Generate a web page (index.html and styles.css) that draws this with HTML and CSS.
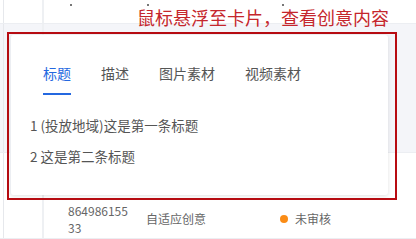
FILE: index.html
```html
<!DOCTYPE html>
<html lang="zh-CN">

<head>
  <meta charset="UTF-8">
  <title>创意预览</title>
  <link rel="stylesheet" href="styles.css">
</head>

<body>
  <section class="table">
    <div class="row head">
      <div class="cell first"></div>
      <div class="cell sticky"></div>
      <div class="cell mark m1"></div>
      <div class="cell mark m2"></div>
      <div class="cell mark m3"></div>
    </div>
    <div class="row hovered">
      <div class="cell first"></div>
      <div class="cell sticky"></div>
    </div>
    <div class="row plain">
      <div class="cell first"></div>
      <div class="cell sticky"></div>
      <div class="cell id">864986155<br>33</div>
      <div class="cell type">自适应创意</div>
      <div class="cell status"><span class="dot"></span>未审核</div>
    </div>
  </section>

  <div class="note">鼠标悬浮至卡片，查看创意内容</div>

  <div class="frame">
    <div class="card">
      <nav class="tabs">
        <div class="tab active">标题</div>
        <div class="tab">描述</div>
        <div class="tab">图片素材</div>
        <div class="tab">视频素材</div>
      </nav>
      <ul class="titles">
        <li>1 (投放地域)这是第一条标题</li>
        <li>2 这是第二条标题</li>
      </ul>
    </div>
  </div>
</body>

</html>
```

FILE: styles.css
```css
* {
  margin: 0;
  padding: 0;
  box-sizing: border-box;
}

body {
  width: 416px;
  height: 239px;
  overflow: hidden;
  position: relative;
  background: #fff;
  font-family: "Noto Sans CJK SC", "Noto Sans", sans-serif;
  color: #555;
}

/* table behind the popover */
.table {
  display: flex;
  flex-direction: column;
}

.row {
  display: flex;
  border-bottom: 1px solid #eceef2;
}

.row.head {
  height: 24px;
  position: relative;
}

.row.hovered {
  height: 129px;
  background: #f4f5f9;
}

.row.plain {
  height: 86px;
  font-size: 12px;
  line-height: 17px;
  color: #666;
}

.cell.first {
  width: 4px;
  border-right: 1px solid #e6e8ec;
  flex: none;
}

.cell.sticky {
  width: 40px;
  border-right: 2px solid #eef0f3;
  flex: none;
}

.mark {
  width: 2px;
  height: 2px;
  background: #777;
  margin-top: 4px;
}

.m1 { margin-left: 26px; }
.m2 { margin-left: 75px; }
.m3 { margin-left: 133px; }

.cell.id {
  width: 102px;
  padding: 49px 0 0 24px;
  flex: none;
}

.cell.type {
  width: 134px;
  padding-top: 57px;
  flex: none;
}

.cell.status {
  padding-top: 57px;
  display: flex;
  align-items: flex-start;
  gap: 7px;
}

.dot {
  width: 8px;
  height: 8px;
  border-radius: 50%;
  background: #fa8c16;
  margin-top: 5px;
}

/* annotation */
.note {
  position: absolute;
  left: 137px;
  top: 6px;
  font-size: 18px;
  line-height: 22px;
  color: #c5262c;
}

.frame {
  position: absolute;
  left: 7px;
  top: 32px;
  width: 390px;
  height: 168px;
  border: 2px solid #b80c12;
  padding: 1px 7px 3px 1px;
}

.card {
  height: 100%;
  background: #fff;
  border-left: 1px solid #eceef2;
  border-radius: 3px;
  box-shadow: 0 1px 4px rgba(0, 0, 0, 0.12);
}

.tabs {
  display: flex;
  gap: 30px;
  padding: 28px 0 0 32px;
}

.tab {
  font-size: 14px;
  line-height: 20px;
  padding-bottom: 10px;
  border-bottom: 2px solid transparent;
  color: #555;
}

.tab.active {
  color: #2468e0;
  border-bottom-color: #2468e0;
}

.titles {
  list-style: none;
  padding: 20px 0 0 19px;
  display: flex;
  flex-direction: column;
  gap: 11px;
  font-size: 13.5px;
  line-height: 20px;
  color: #555;
}
```
